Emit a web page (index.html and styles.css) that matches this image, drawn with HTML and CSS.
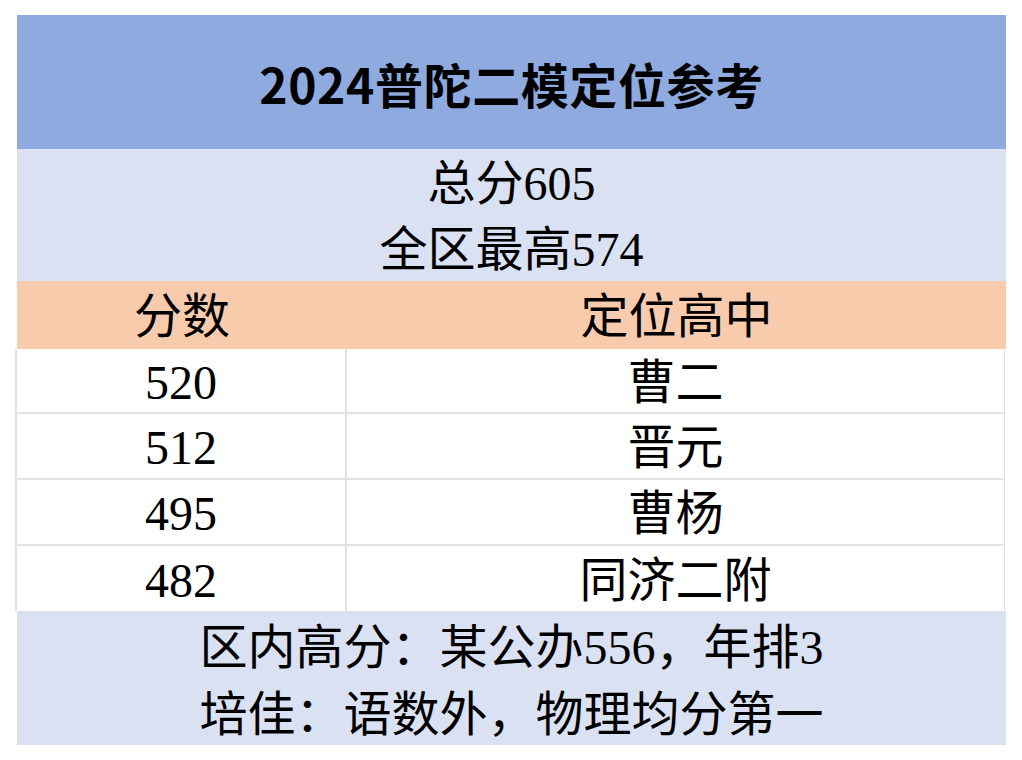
FILE: index.html
```html
<!DOCTYPE html>
<html lang="zh-CN">
<head>
<meta charset="utf-8">
<title>2024普陀二模定位参考</title>
<link rel="stylesheet" href="styles.css">
</head>
<body>
<div class="sheet">
  <div class="title">2024普陀二模定位参考</div>
  <div class="band summary">
    <div class="line">总分605</div>
    <div class="line">全区最高574</div>
  </div>
  <div class="head">
    <div class="cell">分数</div>
    <div class="cell">定位高中</div>
  </div>
  <div class="rows">
    <div class="row r1"><div class="cell score">520</div><div class="cell school">曹二</div></div>
    <div class="row r2"><div class="cell score">512</div><div class="cell school">晋元</div></div>
    <div class="row r3"><div class="cell score">495</div><div class="cell school">曹杨</div></div>
    <div class="row r4"><div class="cell score">482</div><div class="cell school">同济二附</div></div>
  </div>
  <div class="band footer">
    <div class="line">区内高分：某公办556，年排3</div>
    <div class="line">培佳：语数外，物理均分第一</div>
  </div>
</div>
</body>
</html>
```

FILE: styles.css
```css
html, body {
  margin: 0;
  padding: 0;
  background: #ffffff;
}

body {
  font-family: "Liberation Serif", "Noto Sans CJK SC", serif;
  color: #000000;
}

.sheet {
  margin: 15px 0 0 17px;
  width: 989px;
}

.title {
  height: 134px;
  background: #8eaadf;
  display: flex;
  align-items: center;
  justify-content: center;
  font-family: "Noto Sans CJK SC", "Noto Sans", sans-serif;
  font-weight: 700;
  font-size: 48px;
  letter-spacing: 0.6px;
  line-height: 1;
  padding-top: 2px;
  box-sizing: border-box;
}

.band {
  background: #d9e1f3;
  display: flex;
  flex-direction: column;
  align-items: center;
  font-size: 48px;
}

.summary {
  height: 132px;
}

.summary .line {
  height: 66px;
  display: flex;
  align-items: center;
  justify-content: center;
  line-height: 1;
  padding-top: 3px;
  box-sizing: border-box;
}

.footer {
  height: 134px;
}

.footer .line {
  height: 67px;
  display: flex;
  align-items: center;
  justify-content: center;
  line-height: 1;
  padding-top: 6px;
  box-sizing: border-box;
}

.head {
  height: 68px;
  background: #f8cbad;
  display: grid;
  grid-template-columns: 330px 1fr;
  font-size: 48px;
}

.cell {
  display: flex;
  align-items: center;
  justify-content: center;
  line-height: 1;
}

.head .cell {
  padding-top: 3px;
}

.rows {
  margin-left: -2px;
  border-left: 2px solid #e2e2e2;
  border-right: 1px solid #e2e2e2;
  width: 990px;
  box-sizing: border-box;
}

.row {
  display: grid;
  grid-template-columns: 330px 1fr;
  font-size: 48px;
  border-bottom: 2px solid #e2e2e2;
  box-sizing: border-box;
}

.row:last-child {
  border-bottom: none;
}

.r1, .r4 { height: 65px; }
.r2, .r3 { height: 66px; }

.score {
  border-right: 2px solid #e2e2e2;
  padding-top: 4px;
}

.school {
  padding-top: 4px;
}
```
